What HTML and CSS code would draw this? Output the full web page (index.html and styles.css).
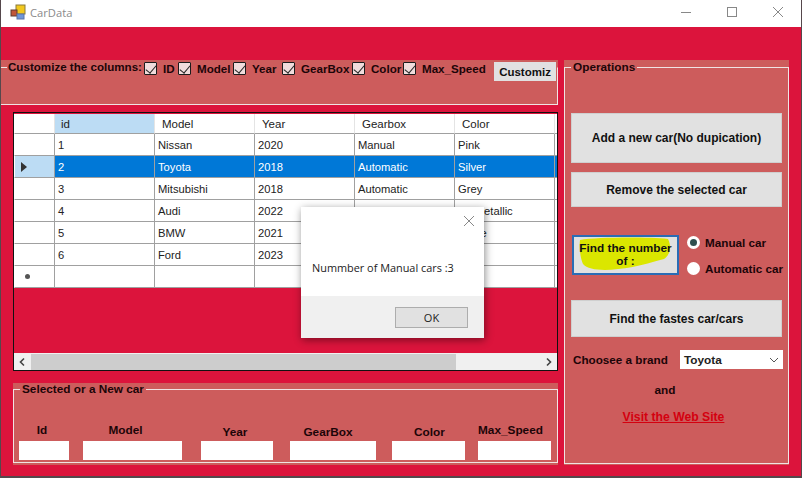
FILE: index.html
```html
<!DOCTYPE html>
<html lang="en">
<head>
  <meta charset="UTF-8" />
  <title>CarData</title>
  <link rel="stylesheet" href="styles.css">
</head>
<body>
  <div class="window">
    <div class="titlebar">
      <svg class="app-icon" width="16" height="16" viewBox="0 0 16 16">
        <rect x="6" y="1" width="9" height="9" fill="#f2c81e" stroke="#8a7a3a"/>
        <rect x="1" y="6" width="6" height="6" fill="#c0563a" stroke="#5a3a30"/>
        <rect x="7" y="10" width="7" height="5" fill="#6f96d8" stroke="#5a75a8"/>
      </svg>
      <span class="app-title">CarData</span>
      <div class="win-controls">
        <svg width="12" height="12" viewBox="0 0 12 12"><path d="M1 6.5h10" stroke="#888"/></svg>
        <svg width="12" height="12" viewBox="0 0 12 12"><rect x="1.5" y="1.5" width="9" height="9" fill="none" stroke="#888"/></svg>
        <svg width="12" height="12" viewBox="0 0 12 12"><path d="M1 1l10 10M11 1L1 11" stroke="#888"/></svg>
      </div>
    </div>

    <div class="client">
      <div class="left">
        <div class="group customize">
          <fieldset>
            <legend>Customize the columns:</legend>
          </fieldset>
          <div class="col-checks">
            <label class="check c1"><span class="box"></span>ID</label>
            <label class="check c2"><span class="box"></span>Model</label>
            <label class="check c3"><span class="box"></span>Year</label>
            <label class="check c4"><span class="box"></span>GearBox</label>
            <label class="check c5"><span class="box"></span>Color</label>
            <label class="check c6"><span class="box"></span>Max_Speed</label>
            <button class="customize-btn">Customiz</button>
          </div>
        </div>

        <div class="grid-view">
          <div class="grid-viewport">
            <table class="cars">
              <thead>
                <tr><th class="row-head"></th><th class="active">id</th><th>Model</th><th>Year</th><th>Gearbox</th><th>Color</th><th></th></tr>
              </thead>
              <tbody>
                <tr><td class="row-head"></td><td>1</td><td>Nissan</td><td>2020</td><td>Manual</td><td>Pink</td><td></td></tr>
                <tr class="selected"><td class="row-head"><span class="arrow"></span></td><td>2</td><td>Toyota</td><td>2018</td><td>Automatic</td><td>Silver</td><td></td></tr>
                <tr><td class="row-head"></td><td>3</td><td>Mitsubishi</td><td>2018</td><td>Automatic</td><td>Grey</td><td></td></tr>
                <tr><td class="row-head"></td><td>4</td><td>Audi</td><td>2022</td><td>Manual</td><td>Se metallic</td><td></td></tr>
                <tr><td class="row-head"></td><td>5</td><td>BMW</td><td>2021</td><td>Automatic</td><td>White</td><td></td></tr>
                <tr><td class="row-head"></td><td>6</td><td>Ford</td><td>2023</td><td>Manual</td><td>Blue</td><td></td></tr>
                <tr><td class="row-head new-row"><span class="star"></span></td><td></td><td></td><td></td><td></td><td></td><td></td></tr>
              </tbody>
            </table>
          </div>
          <div class="hscroll">
            <svg width="17" height="16" viewBox="0 0 17 16"><path d="M10 4.5L6.5 8l3.5 3.5" fill="none" stroke="#444" stroke-width="1.6"/></svg>
            <div class="track"><div class="thumb"></div></div>
            <svg width="17" height="16" viewBox="0 0 17 16"><path d="M7 4.5L10.5 8 7 11.5" fill="none" stroke="#444" stroke-width="1.6"/></svg>
          </div>
        </div>

        <div class="group selected-car">
          <fieldset>
            <legend>Selected or a New car</legend>
            <div class="fields">
              <div class="field f-id"><span>Id</span><input type="text"></div>
              <div class="field f-model"><span>Model</span><input type="text"></div>
              <div class="field f-year low"><span>Year</span><input type="text"></div>
              <div class="field f-gear low"><span>GearBox</span><input type="text"></div>
              <div class="field f-color low"><span>Color</span><input type="text"></div>
              <div class="field f-speed"><span>Max_Speed</span><input type="text"></div>
            </div>
          </fieldset>
        </div>
      </div>

      <div class="group operations">
        <fieldset>
          <legend>Operations</legend>
          <button class="op-btn add">Add a new car(No dupication)</button>
          <button class="op-btn remove">Remove the selected car</button>
          <div class="count-row">
            <button class="count-btn">
              <svg class="scribble" width="94" height="34" viewBox="0 0 94 34"><path d="M2 3C20 0 70 0 90 2c4 8 2 16-4 20-16 4-26 8-46 10-15 2-30 1-35-5C2 20 1 10 2 3z" fill="#dbe600"/></svg>
              <span>Find the number of :</span>
            </button>
            <div class="radios">
              <label class="radio"><span class="dot on"></span>Manual car</label>
              <label class="radio"><span class="dot"></span>Automatic car</label>
            </div>
          </div>
          <button class="op-btn fastest">Find the fastes car/cars</button>
          <div class="brand-row">
            <span>Choosee a brand</span>
            <div class="brand-select">Toyota
              <svg width="10" height="6" viewBox="0 0 10 6"><path d="M1 1l4 4 4-4" fill="none" stroke="#555"/></svg>
            </div>
          </div>
          <div class="and">and</div>
          <a class="site-link" href="#">Visit the Web Site</a>
        </fieldset>
      </div>
    </div>

    <div class="dialog">
      <svg class="dialog-close" width="12" height="12" viewBox="0 0 12 12"><path d="M1 1l10 10M11 1L1 11" stroke="#888"/></svg>
      <div class="dialog-body">Nummber of Manual cars :3</div>
      <div class="dialog-foot"><button class="ok">OK</button></div>
    </div>
  </div>
</body>
</html>
```

FILE: styles.css
```css
* {
  box-sizing: border-box;
}
body {
  margin: 0;
  font-family: "Liberation Sans", Arial, sans-serif;
  background: #dc143c;
}
.window {
  position: relative;
  width: 802px;
  height: 478px;
  background: #dc143c;
  border-left: 1px solid #55484c;
  border-right: 1px solid #55484c;
  border-bottom: 2px solid #55484c;
  overflow: hidden;
}
.titlebar {
  display: flex;
  align-items: center;
  height: 27px;
  background: #fff;
  padding: 0 0 3px 9px;
}
.app-title {
  margin-left: 4px;
  font-family: "Open Sans", sans-serif;
  font-size: 11.2px;
  color: #8a8a8a;
}
.win-controls {
  margin-left: auto;
  display: flex;
  gap: 34px;
  padding-right: 17px;
}

.client {
  display: flex;
  align-items: flex-start;
}
.left {
  width: 557px;
  padding-top: 33px;
}

/* group boxes */
.group {
  background: #cd5c5c;
  position: relative;
}
fieldset {
  margin: 0;
  padding: 0;
  border: 1px solid #f0e4e4;
  height: 100%;
  min-width: 0;
}
legend {
  margin-left: 6px;
  padding: 0 2px;
  font-size: 11.8px;
  font-weight: bold;
  line-height: 14px;
  color: #1c0508;
  background: #cd5c5c;
}
.customize {
  height: 45px;
}
.customize::before {
  content: "";
  position: absolute;
  left: 0;
  top: 7px;
  width: 6px;
  height: 1px;
  background: #f0e4e4;
}
.customize fieldset {
  border-left: 0;
  border-top-color: #cd5c5c;
}
.customize legend {
  margin-left: 6px;
  padding: 0 1px;
  font-size: 11.6px;
}
.col-checks {
  position: absolute;
  left: 143px;
  top: 0;
  display: flex;
  align-items: flex-start;
}
.check {
  display: flex;
  align-items: center;
  gap: 6px;
  height: 16px;
  font-size: 11.6px;
  font-weight: bold;
  color: #1c0508;
}
.box {
  position: relative;
  flex: none;
  width: 13px;
  height: 13px;
  background: #f0dcdc;
  border: 1px solid #1c1c1c;
  border-radius: 1px;
}
.box::after {
  content: "";
  position: absolute;
  left: 3px;
  top: 0;
  width: 5px;
  height: 9px;
  border: solid #222;
  border-width: 0 1px 1px 0;
  transform: rotate(40deg);
}
.c1 { width: 34px; }
.c2 { width: 55px; }
.c3 { width: 49px; }
.c4 { width: 70px; }
.c5 { width: 51px; }
.c6 { width: 85px; }
.customize-btn {
  margin: 2px 0 0 6px;
  width: 62px;
  height: 19px;
  padding: 0;
  border: 0;
  background: #e1e1e1;
  font: bold 11.5px "Liberation Sans", Arial, sans-serif;
  color: #111;
}

/* data grid */
.grid-view {
  margin: 7px 0 0 12px;
  width: 545px;
  height: 259px;
  background: #dc143c;
  border: 1px solid #111;
  display: flex;
  flex-direction: column;
  justify-content: space-between;
}
.grid-viewport {
  overflow: hidden;
  padding-top: 1px;
}
.cars {
  table-layout: fixed;
  width: 641px;
  border-collapse: separate;
  border-spacing: 0;
  font-size: 11.2px;
  color: #222;
}
.cars th, .cars td {
  width: 100px;
  height: 22px;
  padding: 0 0 0 3px;
  background: #fff;
  border-right: 1px solid #a0a0a0;
  border-bottom: 1px solid #a0a0a0;
  font-weight: normal;
  text-align: left;
  white-space: nowrap;
  overflow: hidden;
}
.cars th {
  height: 20px;
  padding-left: 7px;
  font-size: 11.5px;
  border-right-color: #e4e4e4;
}
.cars .row-head {
  width: 41px;
  padding: 0;
  border-left: 1px solid #fff;
}
.cars th.active {
  padding-left: 6px;
  background: #bcdcf4;
}
.selected td {
  background: #0078d7;
  color: #fff;
}
.cars .selected .row-head {
  background: #bcdcf4;
}
.arrow {
  display: block;
  margin-left: 6px;
  width: 0;
  height: 0;
  border-left: 6px solid #333;
  border-top: 5px solid transparent;
  border-bottom: 5px solid transparent;
}
.star {
  display: block;
  margin-left: 10px;
  width: 5px;
  height: 5px;
  border-radius: 50%;
  background: #555;
}
.hscroll {
  display: flex;
  align-items: center;
  height: 17px;
  background: #f0f0f0;
}
.track {
  flex: 1;
  height: 16px;
}
.thumb {
  width: 425px;
  height: 16px;
  background: #cdcdcd;
}

/* selected or new car */
.selected-car {
  margin: 12px 0 0 12px;
  width: 545px;
  height: 82px;
}
.selected-car fieldset {
  height: 80px;
}
.selected-car legend {
  line-height: 12px;
}
.fields {
  display: flex;
  align-items: flex-end;
  height: 68px;
  padding-bottom: 3px;
}
.field {
  display: flex;
  flex-direction: column;
  align-items: center;
  gap: 4px;
  font-size: 11.8px;
  font-weight: bold;
  color: #1c0508;
}
.field.low {
  gap: 2px;
}
.field input {
  height: 19px;
  border: 0;
  background: #fff;
  padding: 0;
  display: block;
}
.f-id { margin-left: 5px; }
.f-id input { width: 50px; }
.f-id span { margin-right: 4px; }
.f-model { margin-left: 14px; }
.f-model input { width: 99px; }
.f-model span { margin-right: 14px; }
.f-year { margin-left: 19px; }
.f-year input { width: 72px; }
.f-year span { margin-right: 4px; }
.f-gear { margin-left: 17px; }
.f-gear input { width: 86px; }
.f-gear span { margin-right: 10px; }
.f-color { margin-left: 16px; }
.f-color input { width: 73px; }
.f-color span { margin-left: 2px; }
.f-speed { margin-left: 13px; }
.f-speed input { width: 73px; }
.f-speed span { margin-right: 8px; white-space: nowrap; }

/* operations */
.operations {
  margin: 33px 0 0 6px;
  width: 225px;
  height: 405px;
}
.operations fieldset {
  height: 404px;
  padding: 0 6px;
}
.operations legend {
  margin-left: 0;
}
.op-btn {
  display: block;
  width: 211px;
  border: 1px solid #cfcfcf;
  background: #e1e1e1;
  font: bold 12px "Liberation Sans", Arial, sans-serif;
  color: #111;
}
.add {
  margin-top: 39px;
  height: 50px;
}
.remove {
  margin-top: 9px;
  height: 35px;
}
.count-row {
  display: flex;
  margin-top: 28px;
  margin-left: 1px;
}
.count-btn {
  position: relative;
  flex: none;
  width: 107px;
  height: 40px;
  padding: 0;
  border: 2px solid #2a6db5;
  background: #e1e1e1;
  font: bold 11.8px/13px "Liberation Sans", Arial, sans-serif;
  color: #111;
}
.count-btn span {
  position: relative;
  display: block;
  padding: 0 4px;
}
.scribble {
  position: absolute;
  left: 4px;
  top: 0;
}
.radios {
  display: flex;
  flex-direction: column;
  gap: 12px;
  margin: 0 0 0 8px;
}
.radio {
  display: flex;
  align-items: center;
  gap: 5px;
  height: 14px;
  font-size: 11.7px;
  font-weight: bold;
  color: #1c0508;
  white-space: nowrap;
}
.dot {
  position: relative;
  flex: none;
  width: 13px;
  height: 13px;
  border-radius: 50%;
  background: #fff;
}
.dot.on::after {
  content: "";
  position: absolute;
  left: 3px;
  top: 3px;
  width: 7px;
  height: 7px;
  border-radius: 50%;
  background: #2f4f4f;
}
.fastest {
  margin-top: 25px;
  height: 37px;
}
.brand-row {
  display: flex;
  align-items: center;
  justify-content: space-between;
  margin-top: 13px;
  width: 212px;
  padding-left: 2px;
  font-size: 11.7px;
  font-weight: bold;
  color: #1c0508;
}
.brand-select {
  display: flex;
  align-items: center;
  justify-content: space-between;
  width: 103px;
  height: 19px;
  padding: 0 4px;
  background: #fff;
  font-size: 11.8px;
  color: #222;
}
.and {
  margin-top: 14px;
  text-align: center;
  padding-right: 23px;
  font-size: 11.8px;
  font-weight: bold;
  color: #1c0508;
}
.site-link {
  display: block;
  margin-top: 13px;
  text-align: center;
  padding-right: 6px;
  font-size: 12.2px;
  font-weight: bold;
  color: #d4000f;
}

/* message box */
.dialog {
  position: absolute;
  left: 300px;
  top: 207px;
  width: 183px;
  height: 131px;
  background: #fff;
  box-shadow: 1px 2px 8px rgba(0, 0, 0, 0.45);
  display: flex;
  flex-direction: column;
}
.dialog-close {
  position: absolute;
  right: 9px;
  top: 8px;
}
.dialog-body {
  flex: 1;
  padding: 53px 0 0 11px;
  font-family: "Open Sans", sans-serif;
  font-size: 10.9px;
  color: #222;
}
.dialog-foot {
  display: flex;
  justify-content: flex-end;
  align-items: center;
  height: 42px;
  padding-right: 16px;
  background: #f0f0f0;
}
.ok {
  width: 73px;
  height: 21px;
  padding: 0;
  border: 1px solid #adadad;
  background: #e1e1e1;
  font-family: "Open Sans", sans-serif;
  font-size: 11px;
  color: #222;
}
```
